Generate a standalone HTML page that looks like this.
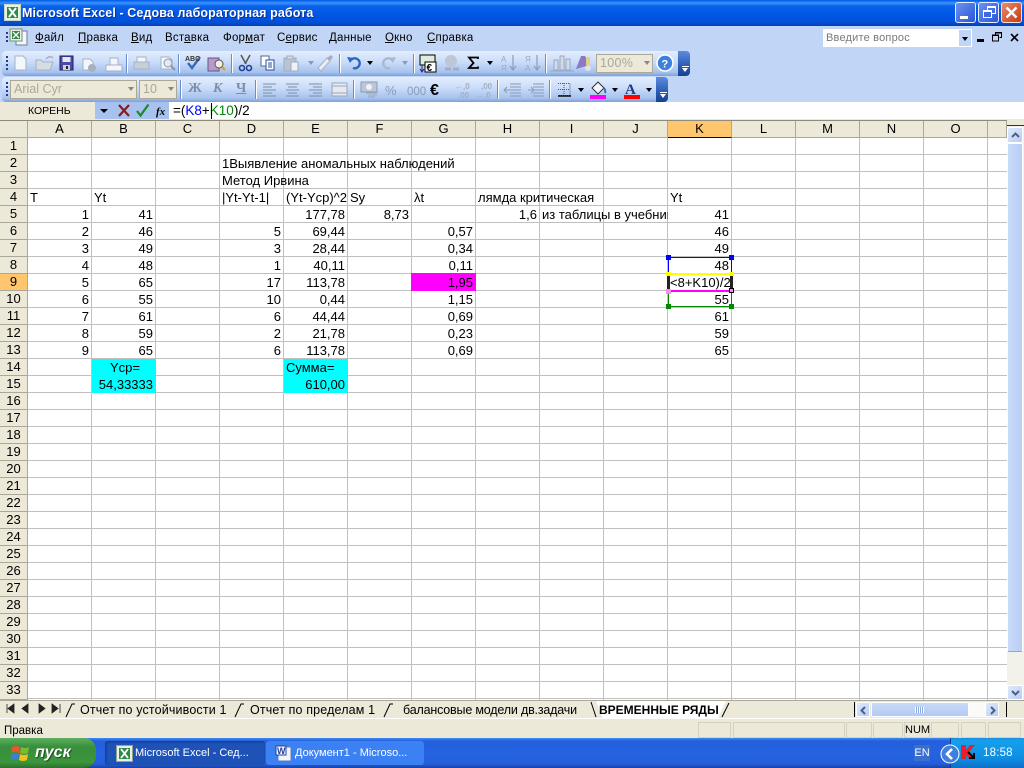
<!DOCTYPE html>
<html><head><meta charset="utf-8"><style>
html,body{margin:0;padding:0;width:1024px;height:768px;overflow:hidden;background:#fff;font-family:"Liberation Sans",sans-serif;color:#000}
div,span,svg{position:absolute;box-sizing:border-box}
u{text-decoration:underline}
.title{left:0;top:0;width:1024px;height:26px;background:linear-gradient(#0058e6 0,#3a93ff 3px,#0a62e8 6px,#0055e5 16px,#0450d8 22px,#0340b5 26px)}
.menu{left:0;top:26px;width:1024px;height:76px;background:#c1d5f7}
.m{top:32px;font-size:11.5px;letter-spacing:.2px;white-space:nowrap}
.tb{height:25px;background:linear-gradient(#e3eefd,#c9dcf9 45%,#a6c2ee 85%,#7e9fd8);border-radius:4px 0 0 4px}
.ch{height:25px;width:12px;background:linear-gradient(#5d8cdc,#2a5bb5 60%,#17418f);border-radius:0 4px 4px 0}
.grip{width:2px;height:2px;left:6px;background:#1c3f8c}
.sep{width:2px;height:19px;background:#6a8cc8;border-right:1px solid #fff}
.cb{height:19px;background:#ece9d8;border:1px solid #aca899;color:#aca899;font-size:12.5px;line-height:17px;padding-left:3px}
.ar{width:0;height:0;border-left:3px solid transparent;border-right:3px solid transparent;border-top:4px solid #000}
.hd{top:121px;height:17px;width:64px;background:#ece9d8;border-right:1px solid #aca899;border-bottom:1px solid #aca899;text-align:center;font-size:13px;line-height:16px}
.rh{left:0;width:28px;height:17px;background:#ece9d8;border-right:1px solid #aca899;border-bottom:1px solid #aca899;text-align:center;font-size:13px;line-height:16px}
.grid{left:28px;top:138px;width:979px;height:562px;background-image:linear-gradient(to right,transparent 63px,#c0c0c0 63px),linear-gradient(to bottom,transparent 16px,#c0c0c0 16px);background-size:64px 17px}
.c{height:17px;font-size:13px;line-height:17px;white-space:nowrap;padding-left:2px}
.n{width:64px;height:17px;font-size:13px;line-height:17px;text-align:right;padding-right:3px;white-space:nowrap}
.tab{top:701px;font-size:12.5px;line-height:18px;white-space:nowrap;letter-spacing:.15px}
.st{top:722px;height:16px;border:1px solid #d6d2c2;font-size:11px;line-height:15px;text-align:center}
.hnd{width:5px;height:5px}
.tk{top:747px;color:#fff;font-size:11px;white-space:nowrap}
</style></head><body>
<div class="title"></div>
<svg style="left:4px;top:4px" width="17" height="17" viewBox="0 0 17 17"><rect x=".5" y=".5" width="16" height="16" fill="#e8f2e4" stroke="#c5d8c4"/><rect x="3" y="3" width="11" height="11" fill="#2f8a4a"/><path d="M5 4l7 9M12 4l-7 9" stroke="#fff" stroke-width="2"/></svg>
<div style="left:22px;top:6px;color:#fff;font-size:12.5px;font-weight:bold;letter-spacing:.1px;white-space:nowrap;text-shadow:1px 1px 0 #0a2f9a">Microsoft Excel - Седова лабораторная работа</div>
<div style="left:955px;top:2px;width:21px;height:21px;border:1px solid #e8eefc;border-radius:3px;background:linear-gradient(135deg,#6a93ee,#2a56d8)"><span style="left:4px;top:13px;width:8px;height:3px;background:#fff"></span></div>
<div style="left:978px;top:2px;width:21px;height:21px;border:1px solid #e8eefc;border-radius:3px;background:linear-gradient(135deg,#6a93ee,#2a56d8)"><span style="left:8px;top:3px;width:9px;height:8px;border:1px solid #fff;border-top-width:2px"></span><span style="left:4px;top:7px;width:9px;height:8px;border:1px solid #fff;border-top-width:2px;background:#3f69e0"></span></div>
<div style="left:1001px;top:2px;width:21px;height:21px;border:1px solid #f4e4dc;border-radius:3px;background:linear-gradient(135deg,#e98a6c,#c93a12)"><svg style="left:3px;top:3px" width="13" height="13"><path d="M1.5 1.5l10 10M11.5 1.5l-10 10" stroke="#fff" stroke-width="2.4"/></svg></div>

<div class="menu"></div>
<span class="grip" style="top:32px"></span><span class="grip" style="top:36px"></span><span class="grip" style="top:40px"></span>
<svg style="left:9px;top:28px" width="19" height="18" viewBox="0 0 19 18"><rect x="7" y="3" width="11" height="14" fill="#f4f6fa" stroke="#6c7f9c"/><rect x="1" y="1" width="12" height="12" fill="#e7f0e2" stroke="#7b8f7b"/><rect x="3" y="3" width="8" height="8" fill="#2c8a45"/><path d="M4 4l6 6M10 4l-6 6" stroke="#fff" stroke-width="1.4"/></svg>
<div class="m" style="left:35px"><u>Ф</u>айл</div>
<div class="m" style="left:78px"><u>П</u>равка</div>
<div class="m" style="left:131px"><u>В</u>ид</div>
<div class="m" style="left:165px">Вст<u>а</u>вка</div>
<div class="m" style="left:223px">Фор<u>м</u>ат</div>
<div class="m" style="left:277px">С<u>е</u>рвис</div>
<div class="m" style="left:329px"><u>Д</u>анные</div>
<div class="m" style="left:385px"><u>О</u>кно</div>
<div class="m" style="left:427px"><u>С</u>правка</div>
<div style="left:823px;top:29px;width:149px;height:18px;background:#fff;font-size:11px;line-height:18px;color:#7a7a7a;padding-left:3px;letter-spacing:.2px">Введите вопрос</div>
<div style="left:959px;top:30px;width:12px;height:16px;background:#c1d5f7"><span class="ar" style="left:3px;top:7px"></span></div>
<div style="left:977px;top:39px;width:7px;height:3px;background:#000"></div>
<svg style="left:992px;top:32px" width="10" height="10"><path d="M3.5 2.5V.5h6v5h-2M.5 3.5h6v5.5h-6z" fill="none" stroke="#000"/><path d="M3 1h7M0 3h7" stroke="#000"/></svg>
<svg style="left:1010px;top:33px" width="9" height="9"><path d="M1 1l7 7M8 1l-7 7" stroke="#000" stroke-width="1.6"/></svg>

<!-- toolbar 1 -->
<div class="tb" style="left:2px;top:51px;width:676px"></div><div class="ch" style="left:678px;top:51px"></div>
<span class="grip" style="top:56px"></span><span class="grip" style="top:60px"></span><span class="grip" style="top:64px"></span><span class="grip" style="top:68px"></span>
<svg style="left:0;top:51px" width="678" height="25" viewBox="0 0 678 25">
<g stroke="#a6b2c6" fill="#f3f6fb"><path d="M15 5h8l3 3v11H15z"/><path d="M83 8h7l3 3v8H83z"/><rect x="106" y="14" width="16" height="6"/><path d="M110 14V7h8v7z"/><rect x="134" y="11" width="15" height="7" fill="#c6cedc"/><path d="M137 11V6h9v5z"/><path d="M161 6h8l3 3v9H161z"/></g>
<path d="M36 19V9h5l2 2h10l-3 8z" fill="#d6dbe4" stroke="#a6b2c6"/><path d="M46 8q4-4 7-1" fill="none" stroke="#a6b2c6" stroke-width="1.5"/>
<rect x="60" y="5" width="13" height="14" fill="#4a4aa8" stroke="#20205a"/><rect x="62.500" y="6" width="8" height="5" fill="#e8e8f4"/><rect x="63" y="14" width="7" height="5" fill="#d0d0d0"/><rect x="66" y="15" width="2" height="3" fill="#222"/>
<circle cx="92" cy="17" r="4" fill="#a8b0be"/><circle cx="168" cy="12" r="4" fill="#e4e9f2" stroke="#8b97ac"/><path d="M171 15l4 4" stroke="#8b97ac" stroke-width="2"/>
<path d="M188 12l4 5 8-11" fill="none" stroke="#3c68b8" stroke-width="2.4"/><text x="185" y="10" font-size="7" font-weight="bold" fill="#333" font-family="Liberation Sans">ABC</text>
<rect x="208" y="7" width="11" height="13" fill="#b89ac8" stroke="#65558a"/><circle cx="219" cy="13" r="4" fill="#f2efe0" stroke="#555"/><path d="M222 16l3 3" stroke="#d4a017" stroke-width="2"/>
<path d="M241 4l5 9M250 4l-5 9" stroke="#555" stroke-width="1.5"/><circle cx="242" cy="17" r="2.500" fill="none" stroke="#20409a" stroke-width="1.6"/><circle cx="249" cy="17" r="2.500" fill="none" stroke="#20409a" stroke-width="1.6"/>
<rect x="261" y="5" width="8" height="10" fill="#fff" stroke="#52688f"/><rect x="266" y="9" width="8" height="10" fill="#fff" stroke="#284e9a"/><path d="M268 12h4M268 14h4M268 16h4" stroke="#284e9a"/>
<rect x="284" y="7" width="12" height="13" fill="#b9c3d4" stroke="#a0acc0"/><rect x="291" y="11" width="7" height="9" fill="#eef1f6" stroke="#a0acc0"/><rect x="287" y="5" width="6" height="3" fill="#d8dde6" stroke="#a0acc0"/>
<path d="M318 17l9-10 3 3-9 10z" fill="#e9edf3" stroke="#a6b2c6"/><path d="M327 7l4-3 2 2-3 4z" fill="#a3aec2"/>
<path d="M351 9a5 5 0 1 1 2 8" fill="none" stroke="#2a66c0" stroke-width="2.400"/><path d="M347 6l7 1-4 5z" fill="#2a66c0"/>
<path d="M392 9a5 5 0 1 0-2 8" fill="none" stroke="#a9b8ce" stroke-width="2.400"/><path d="M396 6l-7 1 4 5z" fill="#a9b8ce"/>
<rect x="420" y="4" width="15" height="10" fill="#dcefdc" stroke="#000"/><rect x="425" y="11" width="11" height="10" fill="#fff" stroke="#000"/><text x="426.500" y="20" font-size="10" font-weight="bold" font-family="Liberation Sans">€</text><path d="M422 14v6m-2-2l2 3 2-3" fill="none" stroke="#22228a"/>
<circle cx="451" cy="10" r="6" fill="#bcc6d6"/><path d="M445 18h6M453 18h6" stroke="#a3aec2" stroke-width="3"/>
<path d="M478 8V6.500h-9l4.500 5.500-4.500 5h9V15.500" fill="none" stroke="#000" stroke-width="1.800"/>
<g fill="#9aa9c2" font-size="8" font-family="Liberation Sans"><text x="501" y="11">А</text><text x="501" y="20">Я</text><text x="525" y="11">Я</text><text x="525" y="20">А</text></g><path d="M513 4v14m-3-3l3 4 3-4M537 4v14m-3-3l3 4 3-4" fill="none" stroke="#8d9cb6" stroke-width="1.200"/>
<path d="M554 19V9h4v10zM560 19V5h4v14zM566 19V8h4v11zM550 20h24" fill="#d4dbe8" stroke="#9aa9c2"/>
<path d="M576 18l5-13h4l5 9z" fill="#8a78c8"/><path d="M586 6h4v8h-4z" fill="#e3d27c"/><circle cx="588" cy="17" r="3" fill="#dde2ec"/>
<circle cx="665" cy="12" r="8" fill="#3f80df" stroke="#fff" stroke-width="1.600"/><text x="661.500" y="16.500" font-size="11" font-weight="bold" fill="#fff" font-family="Liberation Sans">?</text>
</svg>
<div class="sep" style="left:126px;top:54px"></div><div class="sep" style="left:178px;top:54px"></div><div class="sep" style="left:231px;top:54px"></div><div class="sep" style="left:339px;top:54px"></div><div class="sep" style="left:413px;top:54px"></div><div class="sep" style="left:545px;top:54px"></div>
<span class="ar" style="left:308px;top:61px;border-top-color:#8e99ad"></span><span class="ar" style="left:367px;top:61px"></span><span class="ar" style="left:402px;top:61px;border-top-color:#8e99ad"></span><span class="ar" style="left:487px;top:61px"></span>
<div class="cb" style="left:596px;top:54px;width:57px;letter-spacing:.3px">100%</div><span class="ar" style="left:644px;top:61px;border-top-color:#888"></span>
<span class="ar" style="left:682px;top:68px;border-top-color:#fff"></span><div style="left:682px;top:66px;width:7px;height:1px;background:#fff"></div>

<!-- toolbar 2 -->
<div class="tb" style="left:2px;top:77px;width:654px"></div><div class="ch" style="left:656px;top:77px"></div>
<span class="grip" style="top:82px"></span><span class="grip" style="top:86px"></span><span class="grip" style="top:90px"></span><span class="grip" style="top:94px"></span>
<div class="cb" style="left:10px;top:80px;width:127px">Arial Cyr</div><span class="ar" style="left:128px;top:87px;border-top-color:#888"></span>
<div class="cb" style="left:139px;top:80px;width:38px">10</div><span class="ar" style="left:168px;top:87px;border-top-color:#888"></span>
<div class="sep" style="left:180px;top:80px"></div><div class="sep" style="left:255px;top:80px"></div><div class="sep" style="left:353px;top:80px"></div><div class="sep" style="left:497px;top:80px"></div><div class="sep" style="left:549px;top:80px"></div>
<div style="left:188px;top:81px;font:bold 14px 'Liberation Serif',serif;color:#7f8ea8">Ж</div>
<div style="left:213px;top:81px;font:italic bold 14px 'Liberation Serif',serif;color:#7f8ea8">К</div>
<div style="left:236px;top:81px;font:bold 14px 'Liberation Serif',serif;color:#7f8ea8;text-decoration:underline">Ч</div>
<svg style="left:0;top:77px" width="660" height="25" viewBox="0 0 660 25">
<path d="M263 7h13M263 10h9M263 13h13M263 16h9M263 19h13M286 7h13M288 10h9M286 13h13M288 16h9M286 19h13M309 7h13M313 10h9M309 13h13M313 16h9M309 19h13" stroke="#7f8ea8"/>
<rect x="332" y="6" width="15" height="13" fill="#e6e9ef" stroke="#9aa7bd"/><path d="M332 9h15M332 16h15" stroke="#9aa7bd"/>
<rect x="361" y="5" width="16" height="10" fill="#bcc6d6" stroke="#8c9bb5"/><circle cx="369" cy="10" r="3" fill="#eef1f6"/><path d="M366 16h11M368 18h9M368 20h7" stroke="#9aa7bd"/>
<text x="385" y="18" font-size="13" fill="#8c9bb5" font-family="Liberation Sans">%</text>
<text x="407" y="18" font-size="11.500" fill="#8c9bb5" font-family="Liberation Sans">000</text>
<text x="430" y="18" font-size="16" font-weight="bold" fill="#000" font-family="Liberation Sans">€</text>
<text x="455" y="12" font-size="8" font-weight="bold" fill="#a3aec2" font-family="Liberation Sans">←,0</text><text x="458" y="21" font-size="8" font-weight="bold" fill="#a3aec2" font-family="Liberation Sans">,00</text>
<text x="481" y="12" font-size="8" font-weight="bold" fill="#a3aec2" font-family="Liberation Sans">,00</text><text x="476" y="21" font-size="8" font-weight="bold" fill="#a3aec2" font-family="Liberation Sans">→,0</text>
<path d="M510 7h11M510 10h11M510 13h11M510 16h11M510 19h11M533 7h11M533 10h11M533 13h11M533 16h11M533 19h11" stroke="#8c9bb5"/><path d="M510 13h-6m3-3l-3 3 3 3M528 13h6m-3-3l3 3-3 3" fill="none" stroke="#8c9bb5"/>
<path d="M558 6.500h12v12h-12M564 6v12M558 12.500h12" fill="none" stroke="#555" stroke-dasharray="1 1"/><path d="M558 19h13" stroke="#000" stroke-width="1.400"/>
<path d="M592 11l6-6 6 6-6 6z" fill="#f3f5fa" stroke="#333"/><path d="M604 11q2 3 1 5" stroke="#3c68b8" stroke-width="2" fill="none"/><rect x="590" y="18" width="16" height="4" fill="#f0f"/>
<text x="625" y="17" font-size="15" font-weight="bold" fill="#203a80" font-family="Liberation Serif">A</text><rect x="624" y="18" width="16" height="4" fill="#f00"/>
</svg>
<span class="ar" style="left:578px;top:88px"></span><span class="ar" style="left:612px;top:88px"></span><span class="ar" style="left:646px;top:88px"></span>
<span class="ar" style="left:660px;top:94px;border-top-color:#fff"></span><div style="left:660px;top:92px;width:7px;height:1px;background:#fff"></div>

<!-- formula bar -->
<div style="left:0;top:102px;width:1024px;height:19px;background:#fff"></div>
<div style="left:0;top:102px;width:95px;height:17px;background:#ece9d8;font-size:10.5px;line-height:18px;padding-left:28px">КОРЕНЬ</div>
<div style="left:95px;top:102px;width:74px;height:17px;background:#a8c2ef"></div>
<span class="ar" style="left:100px;top:109px;border-left-width:4px;border-right-width:4px"></span>
<svg style="left:117px;top:103px" width="50" height="15"><path d="M2 2l10 11M12 2L2 13" stroke="#8a1a1a" stroke-width="2.200"/><path d="M20 8l3.500 4.500 8-11" fill="none" stroke="#1a8a2a" stroke-width="2.200"/><text x="39" y="12" font-size="11" font-style="italic" font-weight="bold" font-family="Liberation Serif">fx</text></svg>
<div style="left:173px;top:102px;font-size:13.500px;line-height:17px;white-space:nowrap">=(<span style="position:static;color:#00f">K8</span>+<span style="position:static;color:#080">K10</span>)/2</div>
<div style="left:211px;top:103px;width:1px;height:16px;background:#000"></div>
<div style="left:0;top:119px;width:1024px;height:2px;background:#ece9d8"></div>
<div style="left:0;top:120px;width:1007px;height:1px;background:#8e8b7d"></div>

<!-- headers -->
<div class="hd" style="left:0;width:28px"></div>
<div class="hd" style="left:28px">A</div><div class="hd" style="left:92px">B</div><div class="hd" style="left:156px">C</div><div class="hd" style="left:220px">D</div><div class="hd" style="left:284px">E</div><div class="hd" style="left:348px">F</div><div class="hd" style="left:412px">G</div><div class="hd" style="left:476px">H</div><div class="hd" style="left:540px">I</div><div class="hd" style="left:604px">J</div><div class="hd" style="left:668px;background:#ffc66e;border-bottom-color:#00007a">K</div><div class="hd" style="left:732px">L</div><div class="hd" style="left:796px">M</div><div class="hd" style="left:860px">N</div><div class="hd" style="left:924px">O</div><div class="hd" style="left:988px;width:19px"></div>

<div class="grid"></div>
<div class="rh" style="top:138px">1</div><div class="rh" style="top:155px">2</div><div class="rh" style="top:172px">3</div><div class="rh" style="top:189px">4</div><div class="rh" style="top:206px">5</div><div class="rh" style="top:223px">6</div><div class="rh" style="top:240px">7</div><div class="rh" style="top:257px">8</div><div class="rh" style="top:274px;background:#ffc66e">9</div><div class="rh" style="top:291px">10</div><div class="rh" style="top:308px">11</div><div class="rh" style="top:325px">12</div><div class="rh" style="top:342px">13</div><div class="rh" style="top:359px">14</div><div class="rh" style="top:376px">15</div><div class="rh" style="top:393px">16</div><div class="rh" style="top:410px">17</div><div class="rh" style="top:427px">18</div><div class="rh" style="top:444px">19</div><div class="rh" style="top:461px">20</div><div class="rh" style="top:478px">21</div><div class="rh" style="top:495px">22</div><div class="rh" style="top:512px">23</div><div class="rh" style="top:529px">24</div><div class="rh" style="top:546px">25</div><div class="rh" style="top:563px">26</div><div class="rh" style="top:580px">27</div><div class="rh" style="top:597px">28</div><div class="rh" style="top:614px">29</div><div class="rh" style="top:631px">30</div><div class="rh" style="top:648px">31</div><div class="rh" style="top:665px">32</div><div class="rh" style="top:682px;height:18px">33</div>

<!-- fills -->
<div style="left:92px;top:359px;width:64px;height:34px;background:#0ff"></div>
<div style="left:284px;top:359px;width:64px;height:34px;background:#0ff"></div>
<div style="left:411px;top:273px;width:65px;height:18px;background:#f0f"></div>

<!-- text -->
<div class="c" style="left:220px;top:155px">1Выявление аномальных наблюдений</div>
<div class="c" style="left:220px;top:172px">Метод Ирвина</div>
<div class="c" style="left:28px;top:189px">T</div><div class="c" style="left:92px;top:189px">Yt</div><div class="c" style="left:220px;top:189px">|Yt-Yt-1|</div><div class="c" style="left:284px;top:189px">(Yt-Yср)^2</div><div class="c" style="left:348px;top:189px">Sy</div><div class="c" style="left:412px;top:189px">λt</div><div class="c" style="left:476px;top:189px">лямда критическая</div><div class="c" style="left:668px;top:189px">Yt</div>
<div class="c" style="left:540px;top:206px;width:128px;overflow:hidden">из таблицы в учебнике</div>

<div class="n" style="left:28px;top:206px">1</div><div class="n" style="left:92px;top:206px">41</div><div class="n" style="left:284px;top:206px">177,78</div><div class="n" style="left:348px;top:206px">8,73</div><div class="n" style="left:476px;top:206px">1,6</div><div class="n" style="left:668px;top:206px">41</div>
<div class="n" style="left:28px;top:223px">2</div><div class="n" style="left:92px;top:223px">46</div><div class="n" style="left:220px;top:223px">5</div><div class="n" style="left:284px;top:223px">69,44</div><div class="n" style="left:412px;top:223px">0,57</div><div class="n" style="left:668px;top:223px">46</div>
<div class="n" style="left:28px;top:240px">3</div><div class="n" style="left:92px;top:240px">49</div><div class="n" style="left:220px;top:240px">3</div><div class="n" style="left:284px;top:240px">28,44</div><div class="n" style="left:412px;top:240px">0,34</div><div class="n" style="left:668px;top:240px">49</div>
<div class="n" style="left:28px;top:257px">4</div><div class="n" style="left:92px;top:257px">48</div><div class="n" style="left:220px;top:257px">1</div><div class="n" style="left:284px;top:257px">40,11</div><div class="n" style="left:412px;top:257px">0,11</div><div class="n" style="left:668px;top:257px">48</div>
<div class="n" style="left:28px;top:274px">5</div><div class="n" style="left:92px;top:274px">65</div><div class="n" style="left:220px;top:274px">17</div><div class="n" style="left:284px;top:274px">113,78</div><div class="n" style="left:412px;top:274px">1,95</div>
<div class="n" style="left:28px;top:291px">6</div><div class="n" style="left:92px;top:291px">55</div><div class="n" style="left:220px;top:291px">10</div><div class="n" style="left:284px;top:291px">0,44</div><div class="n" style="left:412px;top:291px">1,15</div><div class="n" style="left:668px;top:291px">55</div>
<div class="n" style="left:28px;top:308px">7</div><div class="n" style="left:92px;top:308px">61</div><div class="n" style="left:220px;top:308px">6</div><div class="n" style="left:284px;top:308px">44,44</div><div class="n" style="left:412px;top:308px">0,69</div><div class="n" style="left:668px;top:308px">61</div>
<div class="n" style="left:28px;top:325px">8</div><div class="n" style="left:92px;top:325px">59</div><div class="n" style="left:220px;top:325px">2</div><div class="n" style="left:284px;top:325px">21,78</div><div class="n" style="left:412px;top:325px">0,23</div><div class="n" style="left:668px;top:325px">59</div>
<div class="n" style="left:28px;top:342px">9</div><div class="n" style="left:92px;top:342px">65</div><div class="n" style="left:220px;top:342px">6</div><div class="n" style="left:284px;top:342px">113,78</div><div class="n" style="left:412px;top:342px">0,69</div><div class="n" style="left:668px;top:342px">65</div>
<div class="c" style="left:92px;top:359px;width:64px;text-align:center">Yср=</div><div class="c" style="left:284px;top:359px">Сумма=</div>
<div class="n" style="left:92px;top:376px">54,33333</div><div class="n" style="left:284px;top:376px">610,00</div>

<!-- reference boxes -->
<div style="left:668px;top:257px;width:64px;height:17px;border:1px solid #00f;border-bottom:none"></div>
<div style="left:668px;top:291px;width:64px;height:16px;border:1px solid #080;border-top:none"></div>
<div style="left:667px;top:273px;width:66px;height:19px;background:#fff;border-left:3px solid #222;border-right:3px solid #222;border-top:2px solid #ff0;border-bottom:2px solid #f0f;font-size:13px;line-height:15px;text-align:center;overflow:hidden;white-space:nowrap">&lt;8+K10)/2</div>
<div class="hnd" style="left:666px;top:255px;background:#00f"></div><div class="hnd" style="left:729px;top:255px;background:#00f"></div>
<div class="hnd" style="left:666px;top:272px;height:4px;background:#ff0"></div><div class="hnd" style="left:729px;top:272px;height:4px;background:#ff0"></div>
<div class="hnd" style="left:666px;top:289px;background:#f8e"></div><div class="hnd" style="left:729px;top:288px;background:#f8e;border:1px solid #000"></div>
<div class="hnd" style="left:666px;top:304px;background:#080"></div><div class="hnd" style="left:729px;top:304px;background:#080"></div>

<!-- v scroll -->
<div style="left:1007px;top:121px;width:17px;height:579px;background:#f3f2ea"></div>
<div style="left:1007px;top:121px;width:17px;height:5px;background:#ece9d8;border-bottom:1px solid #333"></div>
<div style="left:1007px;top:127px;width:16px;height:16px;background:linear-gradient(135deg,#dfe9fc,#b8cdf5);border:1px solid #fff;border-radius:2px"><svg style="left:3px;top:4px" width="9" height="6"><path d="M1 5l3.500-3.500L8 5" fill="none" stroke="#4d6185" stroke-width="2"/></svg></div>
<div style="left:1007px;top:143px;width:16px;height:509px;background:linear-gradient(to right,#c9daf9,#b8cdf5);border:1px solid #fff;border-bottom-color:#8aa8e0;border-radius:2px"></div>
<div style="left:1007px;top:685px;width:16px;height:15px;background:linear-gradient(135deg,#dfe9fc,#b8cdf5);border:1px solid #fff;border-radius:2px"><svg style="left:3px;top:4px" width="9" height="6"><path d="M1 1l3.500 3.500L8 1" fill="none" stroke="#4d6185" stroke-width="2"/></svg></div>

<!-- tabs -->
<div style="left:0;top:700px;width:1024px;height:18px;background:#ece9d8;border-top:1px solid #aca899"></div>
<svg style="left:0;top:700px" width="80" height="18"><path d="M7 4v9M14 4v9l-6-4.500zM28 4v9l-6-4.500zM39 4v9l6-4.500zM52 4l6 4.500L52 13zM60 4v9" fill="#222" stroke="#222" stroke-width=".8"/><path d="M66 17l6-13h3" fill="none" stroke="#000"/></svg>
<div class="tab" style="left:80px">Отчет по устойчивости 1</div>
<svg style="left:234px;top:700px" width="12" height="18"><path d="M1 17l6-13h3" fill="none" stroke="#000"/></svg>
<div class="tab" style="left:250px">Отчет по пределам 1</div>
<svg style="left:383px;top:700px" width="12" height="18"><path d="M1 17l6-13h3" fill="none" stroke="#000"/></svg>
<div class="tab" style="left:403px;letter-spacing:-.18px">балансовые модели дв.задачи</div>
<div style="left:596px;top:701px;width:130px;height:17px;background:#fff;clip-path:polygon(0 0,100% 0,94% 100%,5% 100%)"></div>
<svg style="left:590px;top:700px" width="140" height="18"><path d="M1 2l5 15M132 17l7-14" stroke="#000"/></svg>
<div class="tab" style="left:599px;font-weight:bold;font-size:12px;letter-spacing:0">ВРЕМЕННЫЕ РЯДЫ</div>
<div style="left:854px;top:702px;width:1px;height:15px;background:#000"></div>
<div style="left:856px;top:702px;width:14px;height:15px;background:linear-gradient(135deg,#dfe9fc,#b8cdf5);border:1px solid #fff"><svg style="left:3px;top:3px" width="7" height="9"><path d="M5 1L1.500 4.500 5 8" fill="none" stroke="#4d6185" stroke-width="2"/></svg></div>
<div style="left:871px;top:702px;width:98px;height:15px;background:linear-gradient(#c9daf9,#b3c9f3);border:1px solid #fff;border-radius:2px"><span style="left:43px;top:4px;width:9px;height:6px;background:repeating-linear-gradient(to right,#fff 0 1px,#8aa8e0 1px 2px)"></span></div>
<div style="left:969px;top:702px;width:16px;height:15px;background:#fbfaf6"></div>
<div style="left:985px;top:702px;width:14px;height:15px;background:linear-gradient(135deg,#dfe9fc,#b8cdf5);border:1px solid #fff"><svg style="left:3px;top:3px" width="7" height="9"><path d="M2 1l3.500 3.500L2 8" fill="none" stroke="#4d6185" stroke-width="2"/></svg></div>
<div style="left:1006px;top:702px;width:1px;height:15px;background:#000"></div>

<!-- status -->
<div style="left:0;top:718px;width:1024px;height:20px;background:#ece9d8;border-top:1px solid #fff"></div>
<div style="left:4px;top:723px;font-size:11.5px;line-height:16px">Правка</div>
<div class="st" style="left:698px;width:33px"></div><div class="st" style="left:733px;width:112px"></div><div class="st" style="left:846px;width:26px"></div><div class="st" style="left:873px;width:30px"></div><div class="st" style="left:904px;width:26px">NUM</div><div class="st" style="left:931px;width:28px"></div><div class="st" style="left:961px;width:25px"></div><div class="st" style="left:988px;width:33px"></div>

<!-- taskbar -->
<div style="left:0;top:738px;width:1024px;height:30px;background:linear-gradient(#3f8cf3 0,#245edb 3px,#2663e0 15px,#245edb 26px,#1941a5 30px)"></div>
<div style="left:0;top:738px;width:96px;height:30px;background:linear-gradient(#5fb05f,#388e3c 30%,#3c963c 80%,#2c6f2c);border-radius:0 12px 12px 0"></div>
<svg style="left:11px;top:744px" width="19" height="19"><path d="M1 3q4-2 8 0l-1 6q-4-2-8 0z" fill="#e8562c"/><path d="M10 3q4 2 8 0l-1 6q-4 2-8 0z" fill="#7fba2c"/><path d="M0 10q4-2 8 0l-1 6q-4-2-8 0z" fill="#3a7fd8"/><path d="M9 10q4 2 8 0l-1 6q-4 2-8 0z" fill="#f4c020"/></svg>
<div style="left:35px;top:744px;color:#fff;font-size:16px;font-weight:bold;font-style:italic;text-shadow:1px 1px 1px #1c4a1c">пуск</div>
<div style="left:105px;top:741px;width:160px;height:24px;background:#1e52b7;border-radius:3px;box-shadow:inset 1px 1px 2px #123a8a"></div>
<svg style="left:116px;top:745px" width="17" height="17"><rect x=".5" y=".5" width="16" height="16" fill="#e7f0e2" stroke="#90a490"/><rect x="3" y="3" width="11" height="11" fill="#2f8a4a"/><path d="M5 4l7 9M12 4l-7 9" stroke="#fff" stroke-width="1.800"/></svg>
<div class="tk" style="left:135px">Microsoft Excel - Сед...</div>
<div style="left:266px;top:741px;width:158px;height:24px;background:#3c81f3;border-radius:3px"></div>
<svg style="left:275px;top:745px" width="17" height="17"><rect x="3" y="2" width="13" height="14" fill="#f0f4fb" stroke="#5c7ab5"/><rect x="1" y="1" width="10" height="9" fill="#fff" stroke="#20409a"/><text x="2" y="9" font-size="9" font-weight="bold" fill="#20409a" font-family="Liberation Sans">W</text></svg>
<div class="tk" style="left:295px">Документ1 - Microso...</div>
<div style="left:914px;top:745px;width:16px;height:16px;background:#3a6fd0;color:#fff;font-size:11px;line-height:16px;text-align:center">EN</div>
<div style="left:950px;top:738px;width:74px;height:30px;background:linear-gradient(#1e8ee8 0,#14a0ec 3px,#0f8ee4 20px,#0d6fc8 30px);border-left:1px solid #0c3c9a"></div>
<svg style="left:940px;top:744px" width="20" height="20"><circle cx="10" cy="10" r="9" fill="#3f7fe0" stroke="#fff"/><path d="M12 5l-5 5 5 5" fill="none" stroke="#fff" stroke-width="2.600"/></svg>
<svg style="left:960px;top:744px" width="16" height="16"><path d="M1 1h5v5l4-5h5l-6 7 6 7H9L6 11v4H1z" fill="#ee1c25"/><path d="M8 8l6 6M14 9v5H9" fill="none" stroke="#000" stroke-width="2"/></svg>
<div class="tk" style="left:983px;font-size:11.5px;letter-spacing:.2px">18:58</div>
</body></html>
